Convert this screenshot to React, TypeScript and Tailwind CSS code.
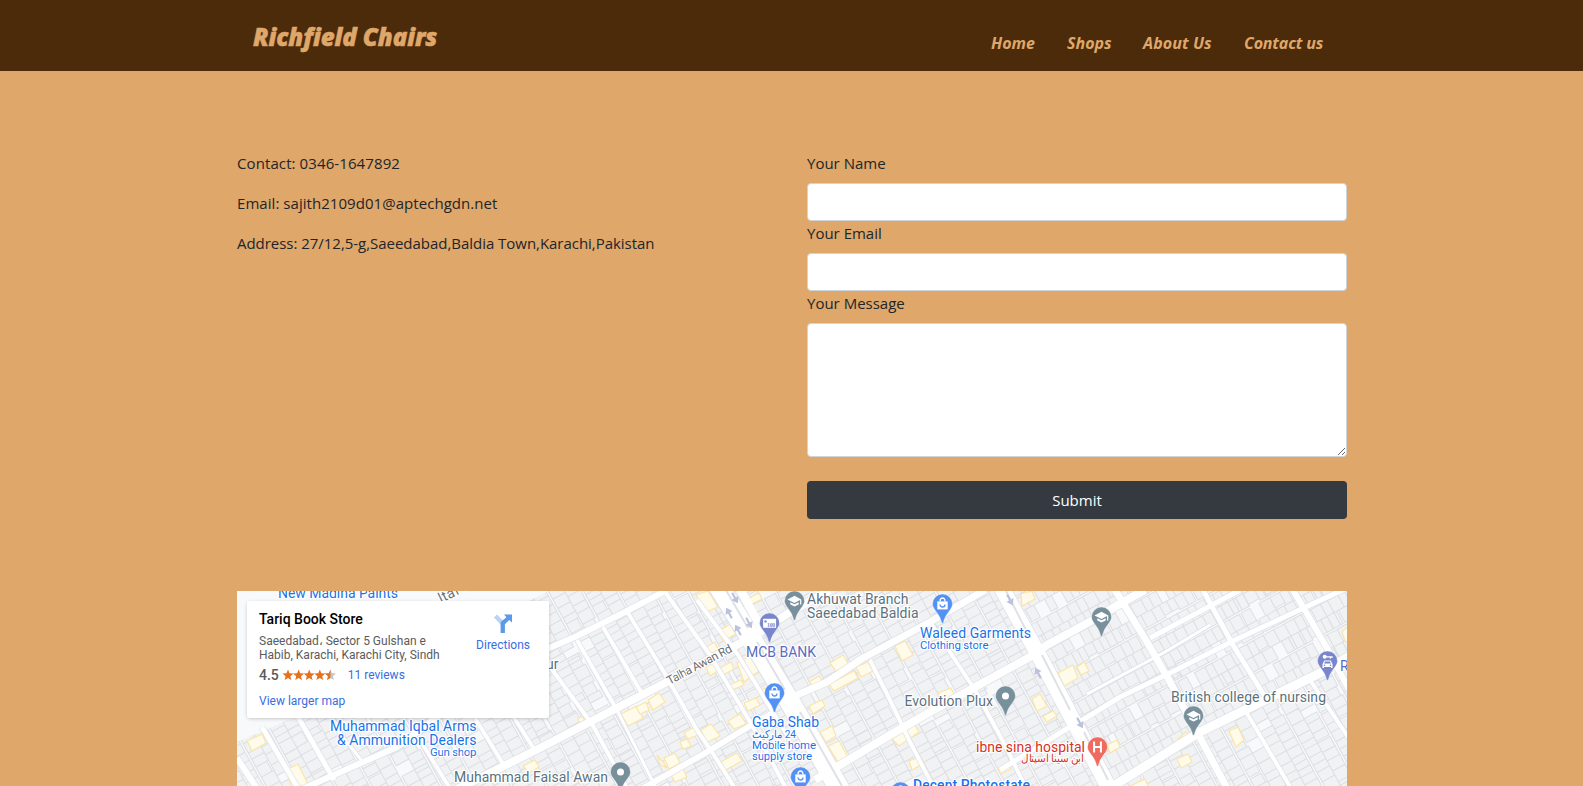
import React from "react";

type Pt = [number, number];

function makeRandom(seed: number) {
  let s = seed;
  return () => {
    s = (s * 1664525 + 1013904223) % 4294967296;
    return s / 4294967296;
  };
}

/* Building plots in a block grid: strips of two columns, divided by narrow lanes. */
function lotPath(seed: number, x0: number, x1: number, y0: number, y1: number, pitch: number, lane: number) {
  const rnd = makeRandom(seed);
  let d = "";
  for (let x = x0; x < x1; x += pitch) {
    const w = (pitch - lane) / 2;
    for (let c = 0; c < 2; c++) {
      const left = x + lane / 2 + c * w;
      let y = y0 + rnd() * 8;
      while (y < y1) {
        const h = 6.5 + rnd() * 6;
        const r = rnd();
        if (r > 0.03) {
          const ww = c === 0 && r > 0.93 ? w * 2 : w - (r < 0.12 ? 2 : 0);
          d += `M${left.toFixed(1)} ${y.toFixed(1)}h${ww.toFixed(1)}v${h.toFixed(1)}h${(-ww).toFixed(1)}z`;
        }
        y += h;
        if (rnd() > 0.96) y += 2;
      }
    }
  }
  return d;
}

const columnLots = lotPath(11, -406, 900, -260, 560, 31, 2.4);
const rowLots = lotPath(29, -320, 320, -250, 260, 30, 2.2);

const roads: { p: string; w: number }[] = [
  { p: "M300 790L397 747L470 692L540 652L577 636L627 611L667 590", w: 6 },
  { p: "M440 797L480 778L540 748L590 722L640 696L667 682L733 647L757 634L787 614L830 590", w: 8 },
  { p: "M640 790L707 752L753 724L775 712", w: 6 },
  { p: "M790 702L797 695L827 682L863 658L930 622L985 590", w: 7 },
  { p: "M815 780L835 768L890 735L930 712L997 675L1030 657L1047 645L1093 620L1123 602L1145 590", w: 8 },
  { p: "M1000 770L1078 722", w: 5 },
  { p: "M1078 723L1120 697L1172 672L1235 640L1310 605L1347 588", w: 5 },
  { p: "M1087 694L1165 652L1210 625", w: 3 },
  { p: "M1150 638L1212 605L1240 590", w: 5 },
  { p: "M1110 788L1163 755L1200 732L1253 706L1320 673L1350 656", w: 9 },
  { p: "M1115 590L1147 642L1170 682L1197 732L1228 790", w: 7 },
  { p: "M1203 590L1233 645L1267 700", w: 5 },
  { p: "M1293 590L1327 648L1352 695", w: 6 },
  { p: "M1245 710L1292 790", w: 4 },
  { p: "M1310 680L1350 740", w: 4 },
  { p: "M577 640L618 712", w: 4 },
  { p: "M603 627L644 697", w: 4 },
  { p: "M545 660L592 724L628 790", w: 4 },
  { p: "M628 613L664 672L697 730L712 752L736 790", w: 4 },
  { p: "M618 712L655 786", w: 3 },
  { p: "M665 592L710 655L752 725L787 790", w: 4 },
  { p: "M697 600L738 655L790 740", w: 4 },
  { p: "M237 758L258 790", w: 6 },
  { p: "M262 727L299 790", w: 5 },
  { p: "M297 715L334 780", w: 5 },
  { p: "M332 724L363 762", w: 3 },
  { p: "M420 740L451 790", w: 4 },
  { p: "M475 718L505 767", w: 4 },
  { p: "M513 716L536 752", w: 4 },
  { p: "M870 660L890 700L910 742L935 790", w: 4 },
  { p: "M930 622L975 690L1005 745L1025 786", w: 4 },
];

const yellowLots: Pt[][] = [
  [[247, 741], [262, 734], [266, 743], [252, 751]],
  [[286, 770], [298, 764], [309, 786], [291, 786]],
  [[523, 766], [535, 760], [539, 767], [529, 773]],
  [[621, 714], [637, 706], [643, 718], [628, 726]],
  [[636, 707], [646, 702], [649, 710], [640, 714]],
  [[648, 700], [659, 693], [665, 702], [653, 710]],
  [[578, 718], [583, 717], [585, 723], [580, 725]],
  [[696, 595], [708, 591], [718, 607], [706, 612]],
  [[718, 631], [731, 624], [736, 634], [723, 641]],
  [[706, 647], [715, 642], [718, 650], [711, 654]],
  [[706, 667], [716, 662], [719, 670], [710, 676]],
  [[720, 668], [731, 662], [734, 669], [723, 675]],
  [[737, 663], [750, 656], [759, 671], [744, 682]],
  [[729, 685], [741, 680], [744, 685], [732, 690]],
  [[701, 730], [711, 724], [720, 736], [706, 743]],
  [[684, 733], [694, 727], [698, 735], [688, 739]],
  [[680, 742], [687, 739], [691, 746], [683, 749]],
  [[664, 758], [675, 753], [680, 763], [669, 769]],
  [[657, 755], [662, 761], [667, 768], [660, 764]],
  [[671, 775], [683, 769], [687, 777], [675, 782]],
  [[728, 721], [740, 714], [746, 724], [734, 729]],
  [[717, 764], [737, 753], [742, 761], [722, 772]],
  [[746, 600], [759, 593], [762, 599], [750, 605]],
  [[759, 692], [772, 684], [779, 697], [766, 704]],
  [[744, 703], [756, 698], [760, 705], [748, 711]],
  [[830, 663], [843, 655], [849, 665], [836, 671]],
  [[809, 682], [819, 676], [822, 681], [813, 686]],
  [[829, 684], [854, 671], [858, 678], [834, 691]],
  [[856, 667], [868, 662], [873, 671], [861, 677]],
  [[895, 646], [905, 641], [913, 655], [902, 661]],
  [[938, 693], [951, 688], [955, 696], [943, 700]],
  [[809, 706], [822, 700], [825, 706], [813, 714]],
  [[820, 732], [832, 726], [836, 736], [826, 742]],
  [[828, 746], [839, 741], [848, 757], [838, 762]],
  [[892, 739], [914, 724], [919, 732], [899, 746]],
  [[909, 761], [920, 757], [924, 763], [912, 770]],
  [[998, 768], [1007, 763], [1011, 769], [1001, 774]],
  [[1021, 594], [1032, 591], [1035, 599], [1022, 606]],
  [[1058, 673], [1073, 665], [1078, 678], [1064, 686]],
  [[1077, 667], [1084, 662], [1089, 671], [1081, 675]],
  [[1032, 699], [1040, 694], [1047, 706], [1037, 711]],
  [[1043, 716], [1053, 711], [1057, 716], [1047, 722]],
  [[1178, 739], [1186, 732], [1190, 738], [1183, 743]],
  [[1229, 731], [1238, 727], [1244, 740], [1236, 747]],
  [[1177, 759], [1188, 754], [1192, 762], [1181, 768]],
  [[1107, 745], [1117, 740], [1120, 747], [1110, 753]],
  [[1130, 786], [1145, 779], [1149, 788], [1133, 790]],
  [[1342, 632], [1348, 626], [1348, 642], [1345, 641]],
];

const arrows: { x: number; y: number; r: number }[] = [
  { x: 735, y: 598, r: 152 },
  { x: 729, y: 613, r: -28 },
  { x: 749, y: 623, r: 152 },
  { x: 738, y: 630, r: -28 },
  { x: 1010, y: 600, r: 152 },
  { x: 1038, y: 673, r: -28 },
  { x: 1080, y: 723, r: 152 },
];

type Kind = "school" | "shop" | "dot" | "bank" | "car" | "hospital";

const pinColor: Record<Kind, string> = {
  school: "#78909c",
  dot: "#78909c",
  shop: "#5491f5",
  bank: "#7986cb",
  car: "#7986cb",
  hospital: "#ef6a5f",
};

const pins: { x: number; y: number; k: Kind }[] = [
  { x: 794.5, y: 601, k: "school" },
  { x: 769.5, y: 623, k: "bank" },
  { x: 942.5, y: 604, k: "shop" },
  { x: 774.5, y: 693, k: "shop" },
  { x: 800.5, y: 777, k: "shop" },
  { x: 900.5, y: 792, k: "shop" },
  { x: 1005.5, y: 696, k: "dot" },
  { x: 620.5, y: 772, k: "dot" },
  { x: 1101.5, y: 617, k: "school" },
  { x: 1193.5, y: 716, k: "school" },
  { x: 1327.5, y: 661, k: "car" },
  { x: 1097.5, y: 747, k: "hospital" },
];

function Glyph({ k }: { k: Kind }) {
  switch (k) {
    case "school":
      return (
        <g fill="#fff">
          <path d="M0 -5.2L-7 -1.6L0 2L5.6 -0.9V3.4H6.8V-1.6Z" />
          <path d="M-4.2 1.2V3.4L0 5.6L4.2 3.4V1.2L0 3.3Z" />
        </g>
      );
    case "shop":
      return (
        <g>
          <path d="M-5.2 -2.6H5.2V5.4H-5.2Z" fill="#fff" />
          <path d="M-2.4 -2.6V-3.6A2.4 2.4 0 0 1 2.4 -3.6V-2.6" fill="none" stroke="#fff" strokeWidth="1.3" />
          <path d="M-2.5 0.4A2.5 2.6 0 0 0 2.5 0.4" fill="none" stroke="#5491f5" strokeWidth="1.3" />
        </g>
      );
    case "bank":
      return (
        <g>
          <rect x="-6.4" y="-4.2" width="13" height="9" fill="#fff" />
          <circle cx="-4" cy="-1.6" r="1.2" fill="#7986cb" />
          <text x="-2.4" y="3.6" fontSize="5.6" textLength="8" fill="#7986cb" fontWeight="700" fontFamily="Liberation Serif, serif">
            100
          </text>
        </g>
      );
    case "car":
      return (
        <g>
          <circle cx="-2.8" cy="-4.2" r="2" fill="#fff" />
          <path d="M-1.4 -4.8H5.2V-3.2H3.6V-2.4H2.2V-3.6H-1.4Z" fill="#fff" />
          <path d="M-3.2 -0.4H3.2L5 3V7H3.4V6H-3.4V7H-5V3Z" fill="#fff" />
          <path d="M-2.5 0.6H2.5L3.4 2.4H-3.4Z" fill="#7986cb" />
          <circle cx="-3" cy="4.2" r="0.8" fill="#7986cb" />
          <circle cx="3" cy="4.2" r="0.8" fill="#7986cb" />
        </g>
      );
    case "hospital":
      return <path d="M-4.4 -5.6H-2.4V-1H2.4V-5.6H4.4V5.6H2.4V1H-2.4V5.6H-4.4Z" fill="#fff" />;
    default:
      return <circle r="3.5" fill="#fff" />;
  }
}

interface Label {
  t: string;
  x: number;
  y: number;
  w: number;
  s: number;
  c: string;
  b?: boolean;
  r?: number;
}

const BLUE = "#1a73e8";
const SLATE = "#5a727e";

const labels: Label[] = [
  { t: "New Madina Paints", x: 278, y: 598, w: 120, s: 14, c: BLUE },
  { t: "ltaf N", x: 441, y: 603, w: 36, s: 14, c: "#6b6f73", r: -26 },
  { t: "ur", x: 546, y: 669, w: 12.5, s: 14, c: SLATE },
  { t: "Muhammad Iqbal Arms", x: 330, y: 731, w: 146.5, s: 14, c: BLUE },
  { t: "& Ammunition Dealers", x: 337, y: 745, w: 139.5, s: 14, c: BLUE },
  { t: "Gun shop", x: 430, y: 756, w: 46.5, s: 11.5, c: BLUE },
  { t: "Muhammad Faisal Awan", x: 454, y: 782, w: 154, s: 14, c: SLATE },
  { t: "Talha Awan Rd", x: 669.5, y: 685, w: 72, s: 12, c: "#6b6f73", r: -28 },
  { t: "MCB BANK", x: 746, y: 657, w: 70, s: 14, c: "#5c6bc0" },
  { t: "Akhuwat Branch", x: 807, y: 604, w: 101.5, s: 14, c: SLATE },
  { t: "Saeedabad Baldia", x: 807, y: 618, w: 111.5, s: 14, c: SLATE },
  { t: "Waleed Garments", x: 920, y: 638, w: 111, s: 14, c: BLUE },
  { t: "Clothing store", x: 920, y: 649, w: 68.5, s: 11.5, c: BLUE },
  { t: "Gaba Shab", x: 752, y: 727, w: 67, s: 14, c: BLUE },
  { t: "Mobile home", x: 752, y: 749, w: 64, s: 11.5, c: BLUE },
  { t: "supply store", x: 752, y: 760, w: 60, s: 11.5, c: BLUE },
  { t: "Evolution Plux", x: 904.5, y: 706, w: 88.5, s: 14, c: SLATE },
  { t: "ibne sina hospital", x: 976, y: 752, w: 109, s: 14, c: "#d93025" },
  { t: "Decent Photostate", x: 913, y: 790, w: 117, s: 14, c: BLUE, b: true },
  { t: "British college of nursing", x: 1171, y: 702, w: 155, s: 14, c: SLATE },
  { t: "R", x: 1340, y: 671, w: 9, s: 14, c: "#5c6bc0" },
];

function StreetMap() {
  return (
    <svg className="block h-full w-full font-[Roboto,sans-serif]" viewBox="237 591 1110 409" preserveAspectRatio="xMinYMin slice">
      <defs>
        <clipPath id="west">
          <path d="M237 742L297 716L549 591H1003L1115 790H237Z" />
        </clipPath>
        <clipPath id="north-east">
          <path d="M1003 591H1347V658L1115 782Z" />
        </clipPath>
        <clipPath id="south-east">
          <path d="M1347 660V1000H1115V784Z" />
        </clipPath>
      </defs>
      <rect x="237" y="591" width="1110" height="409" fill="#f8f9fa" />
      <g fill="#f1f2f4" stroke="#dcdee3" strokeWidth="1">
        <g clipPath="url(#west)">
          <path d={columnLots} transform="translate(577 640) rotate(-28.5)" />
        </g>
        <g clipPath="url(#south-east)">
          <path d={columnLots} transform="translate(577 640) rotate(-28.5)" />
        </g>
        <g clipPath="url(#north-east)">
          <path d={rowLots} transform="translate(1150 650) rotate(61.5)" />
        </g>
      </g>
      <g fill="#fffbeb" stroke="#fbe5a6" strokeWidth="1.2">
        {yellowLots.map((p, i) => (
          <polygon key={i} points={p.map((q) => q.join(",")).join(" ")} />
        ))}
      </g>
      <g fill="none" stroke="#dfe1e7" strokeLinejoin="round">
        {roads.map((r, i) => (
          <path key={i} d={r.p} strokeWidth={r.w + 1.4} />
        ))}
        <path d="M718 585L763 658L790 702L840 790" strokeWidth="22" />
        <path d="M1000 585L1037 652L1074 722L1110 790" strokeWidth="17" />
      </g>
      <g fill="none" stroke="#fff" strokeLinejoin="round">
        {roads.map((r, i) => (
          <path key={i} d={r.p} strokeWidth={r.w} />
        ))}
        <path d="M718 585L763 658L790 702L840 790" strokeWidth="20" />
        <path d="M738 585L763 632" strokeWidth="8" />
        <path d="M1000 585L1037 652L1074 722L1110 790" strokeWidth="15.5" />
      </g>
      <g fill="none" stroke="#dfe1e7" strokeWidth="2">
        <path d="M723 585L748 628M757 642L785 690M800 712L842 786" />
        <path d="M1006 591L1030 638M1042 655L1070 710M1084 732L1108 780" />
      </g>
      <g fill="#bcc2dc">
        {arrows.map((a, i) => (
          <path key={i} d="M0 -6L4 0H1.1V6H-1.1V0H-4Z" transform={`translate(${a.x} ${a.y}) rotate(${a.r})`} />
        ))}
      </g>
      {pins.map((p, i) => (
        <g key={i} transform={`translate(${p.x} ${p.y})`}>
          <path
            d="M0 -10A10 10 0 0 1 10 0C10 5.5 3 9 0.9 18.4C0.5 19.6 -0.5 19.6 -0.9 18.4C-3 9 -10 5.5 -10 0A10 10 0 0 1 0 -10Z"
            fill={pinColor[p.k]}
            stroke="#fff"
            strokeOpacity="0.6"
            strokeWidth="0.6"
          />
          <Glyph k={p.k} />
        </g>
      ))}
      <g stroke="#fff" strokeWidth="2.4" strokeLinejoin="round" className="[paint-order:stroke]">
        {labels.map((l) => (
          <text
            key={l.t}
            fontSize={l.s}
            fontWeight={l.b ? 500 : 400}
            fill={l.c}
            textLength={l.w}
            transform={`translate(${l.x} ${l.y}) rotate(${l.r ?? 0})`}
          >
            {l.t}
          </text>
        ))}
        <text x="752" y="738" fontSize="11" fill={BLUE} textLength="44" lengthAdjust="spacingAndGlyphs" direction="rtl" textAnchor="end">
          24 ماركيٹ
        </text>
        <text x="1021" y="762" fontSize="11" fill="#d93025" textLength="63" lengthAdjust="spacingAndGlyphs">
          ابن سينا اسپتال
        </text>
      </g>
    </svg>
  );
}

const STAR = "M6 0.6L7.5 4.3L11.5 4.6L8.4 7.2L9.4 11.1L6 9L2.6 11.1L3.6 7.2L0.5 4.6L4.5 4.3Z";

function Stars() {
  return (
    <svg className="h-3 w-[54px]" viewBox="0 0 54 12">
      {[0, 1, 2, 3].map((i) => (
        <path key={i} d={STAR} fill="#e7711b" transform={`translate(${i * 10.6} 0)`} />
      ))}
      <path d={STAR} fill="#c4c4c4" transform="translate(42.4 0)" />
      <path d="M6 0.6V9L2.6 11.1L3.6 7.2L0.5 4.6L4.5 4.3Z" fill="#e7711b" transform="translate(42.4 0)" />
    </svg>
  );
}

function PlaceCard() {
  return (
    <div className="absolute top-[10px] left-[10px] flex h-[117px] w-[302px] justify-between rounded-[2px] bg-white pr-[19px] pl-3 font-[Roboto,sans-serif] text-xs leading-[14px] text-[#5b5b5b] shadow-[0_1px_4px_-1px_rgba(0,0,0,0.3)]">
      <div className="pt-[9px]">
        <div className="text-sm leading-[18px] font-medium text-black">Tariq Book Store</div>
        <div className="mt-[6px] w-[200px]">
          Saeedabad، Sector 5 Gulshan e<br />
          Habib, Karachi, Karachi City, Sindh
        </div>
        <div className="mt-[5px] flex items-center">
          <span className="mr-[3px] text-sm leading-4 font-medium">4.5</span>
          <Stars />
          <a className="ml-3 text-[#3a6de0]">11 reviews</a>
        </div>
        <a className="mt-[11px] block text-[#3a6de0]">View larger map</a>
      </div>
      <div className="flex flex-col items-center pt-3">
        <svg className="h-[22px] w-[22px]" viewBox="0 0 22 22">
          <path d="M2 4.6L5 1.6L12.4 9L9.4 12.6Z" fill="#b9d3f5" />
          <path d="M12 1.6H20V9.6L17.2 6.9L12.9 11.3V20H8.6V10.6C8.6 9.6 9 8.9 9.6 8.3L14.4 4.2Z" fill="#5c9ae6" />
        </svg>
        <a className="mt-[3px] text-[#3a6de0]">Directions</a>
      </div>
    </div>
  );
}

const navItems = [
  { name: "Home", style: "w-[45px]" },
  { name: "Shops", style: "w-[45px]" },
  { name: "About Us", style: "w-[70px] tracking-[0.1px]" },
  { name: "Contact us", style: "w-[79px] tracking-[-0.15px]" },
];

function Field({ label, children }: { label: string; children: React.ReactNode }) {
  return (
    <label className="block">
      <span className="mb-2 block h-6 leading-6">{label}</span>
      {children}
    </label>
  );
}

export default function App() {
  return (
    <div className="h-[786px] overflow-hidden bg-[#dfa769] font-['Open_Sans','Noto_Sans',sans-serif] text-[15px] leading-6 text-[#212529]">
      <header className="h-[71px] bg-[#4c2b0b]">
        <div className="ml-[237px] flex w-[1110px] justify-between pr-6 pl-4 text-[#dfa769] italic">
          <h1 className="pt-[19px] text-2xl leading-9 font-extrabold tracking-[-0.07px] whitespace-nowrap [-webkit-text-stroke:0.5px_#dfa769]">
            Richfield Chairs
          </h1>
          <nav className="flex gap-[31px] pt-[31px] text-base leading-6 font-bold whitespace-nowrap">
            {navItems.map((n) => (
              <a key={n.name} className={n.style}>
                {n.name}
              </a>
            ))}
          </nav>
        </div>
      </header>
      <main className="ml-[237px] w-[1110px] pt-20">
        <section className="flex gap-[30px]">
          <div className="flex w-[540px] flex-col gap-4">
            <p className="tracking-[0.1px]">Contact: 0346-1647892</p>
            <p className="tracking-[0.05px]">Email: sajith2109d01@aptechgdn.net</p>
            <p className="tracking-[-0.03px]">Address: 27/12,5-g,Saeedabad,Baldia Town,Karachi,Pakistan</p>
          </div>
          <form className="w-[540px]">
            <Field label="Your Name">
              <input className="block h-[38px] w-full rounded border border-[#ced4da] bg-white px-3" />
            </Field>
            <Field label="Your Email">
              <input className="block h-[38px] w-full rounded border border-[#ced4da] bg-white px-3" />
            </Field>
            <Field label="Your Message">
              <textarea className="block h-[134px] w-full resize rounded border border-[#ced4da] bg-white px-3 py-1.5" />
            </Field>
            <button type="button" className="mt-6 block h-[38px] w-full rounded bg-[#343a40] text-white">
              Submit
            </button>
          </form>
        </section>
        <section className="relative mt-[72px] h-[409px] overflow-hidden">
          <StreetMap />
          <PlaceCard />
        </section>
      </main>
    </div>
  );
}
